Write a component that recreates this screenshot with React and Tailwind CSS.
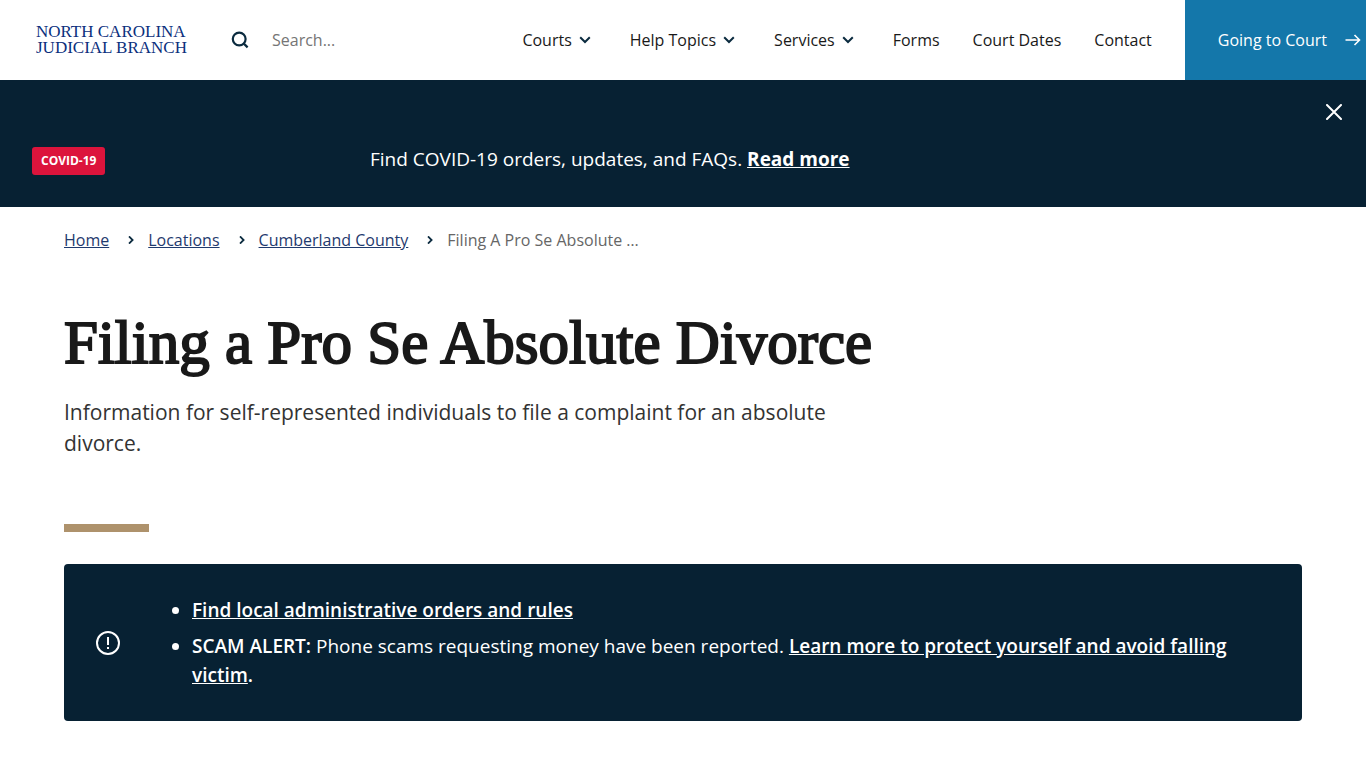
import { useState } from "react";

const navLinks = [
  { label: "Courts", menu: true },
  { label: "Help Topics", menu: true },
  { label: "Services", menu: true },
  { label: "Forms" },
  { label: "Court Dates" },
  { label: "Contact" },
];

const crumbs = ["Home", "Locations", "Cumberland County"];

const SearchIcon = () => (
  <svg width="18" height="18" viewBox="0 0 18 18" fill="none" stroke="#0b2b3f" strokeWidth="2.2" aria-hidden="true">
    <circle cx="8.2" cy="8" r="6.4" />
    <path d="M12.8 12.6L16.6 16.4" />
  </svg>
);

const ChevronDown = () => (
  <svg width="12" height="8" viewBox="0 0 12 8" fill="none" stroke="#0b2b3f" strokeWidth="2" aria-hidden="true">
    <path d="M1.2 1.3L6 6L10.8 1.3" />
  </svg>
);

const ChevronRight = () => (
  <svg width="6" height="8" viewBox="0 0 6 8" fill="none" stroke="#0b2b3f" strokeWidth="1.8" aria-hidden="true">
    <path d="M1 0.4L4.6 4L1 7.6" />
  </svg>
);

const ArrowRight = () => (
  <svg width="16" height="12" viewBox="0 0 16 12" fill="none" stroke="white" strokeWidth="1.6" aria-hidden="true">
    <path d="M0.5 6H14.5M9.5 1L14.5 6L9.5 11" />
  </svg>
);

const CloseIcon = () => (
  <svg width="16" height="16" viewBox="0 0 16 16" fill="none" stroke="white" strokeWidth="2" strokeLinecap="round" aria-hidden="true">
    <path d="M1 1L15 15M15 1L1 15" />
  </svg>
);

const AlertIcon = () => (
  <svg width="24" height="24" viewBox="0 0 24 24" fill="none" stroke="white" strokeWidth="2" aria-hidden="true">
    <circle cx="12" cy="12" r="11" />
    <path d="M12 6V14M12 16V18" />
  </svg>
);

const Header = () => (
  <header className="flex h-20 items-center bg-white">
    <a
      href="#"
      className="ml-9 w-[152px] shrink-0 font-['Liberation_Serif',serif] text-[17px] leading-4 text-[#0b2f7d]"
    >
      NORTH CAROLINA JUDICIAL BRANCH
    </a>
    <form className="ml-[43px] flex min-w-0 flex-1 items-center gap-[23px]">
      <button type="submit" aria-label="Search" className="cursor-pointer">
        <SearchIcon />
      </button>
      <input
        type="search"
        aria-label="Search"
        placeholder="Search..."
        className="w-full min-w-0 outline-none placeholder:text-[#757575]"
      />
    </form>
    <nav className="flex shrink-0 items-center gap-[33px] pr-[33px]">
      {navLinks.map((link) =>
        link.menu ? (
          <button key={link.label} className="flex cursor-pointer items-center gap-[7px] pr-[6px]">
            {link.label}
            <ChevronDown />
          </button>
        ) : (
          <a key={link.label} href="#">
            {link.label}
          </a>
        )
      )}
    </nav>
    <a
      href="#"
      className="flex h-full shrink-0 items-center gap-[18px] bg-[#1477aa] pr-[5px] pl-[33px] font-medium text-white"
    >
      Going to Court
      <ArrowRight />
    </a>
  </header>
);

const CovidBanner = ({ onClose }) => (
  <section className="relative bg-[#072133] px-8 pt-16 pb-8 text-white">
    <button
      aria-label="Close"
      onClick={onClose}
      className="absolute top-6 right-6 cursor-pointer"
    >
      <CloseIcon />
    </button>
    <div className="flex items-start">
      <div className="w-[338px] shrink-0 pt-[3px]">
        <span className="inline-block rounded-[3px] bg-[#dc143c] px-[9px] text-xs leading-7 font-bold">
          COVID-19
        </span>
      </div>
      <p className="text-[19px] leading-[31px] font-medium">
        Find COVID-19 orders, updates, and FAQs.{" "}
        <a href="#" className="font-bold underline">
          Read more
        </a>
      </p>
    </div>
  </section>
);

const Breadcrumbs = () => (
  <nav aria-label="Breadcrumb" className="pt-[21px]">
    <ol className="flex items-center">
      {crumbs.map((crumb) => (
        <li key={crumb} className="flex items-center">
          <a href="#" className="text-[#1f3a6e] underline">
            {crumb}
          </a>
          <span className="mr-[14px] ml-[19px]">
            <ChevronRight />
          </span>
        </li>
      ))}
      <li className="text-[#666]">Filing A Pro Se Absolute …</li>
    </ol>
  </nav>
);

const LocalAlert = () => (
  <section className="mt-8 flex items-center gap-[52px] rounded bg-[#072133] px-8 pt-8 pb-[31px] text-white">
    <AlertIcon />
    <ul className="flex-1 list-disc space-y-[7px] pl-5 text-[19px] leading-[29px] font-medium">
      <li>
        <a href="#" className="font-semibold underline">
          Find local administrative orders and rules
        </a>
      </li>
      <li>
        <strong className="font-semibold">SCAM ALERT:</strong> Phone scams
        requesting money have been reported.{" "}
        <a href="#" className="font-semibold underline">
          Learn more to protect yourself and avoid falling victim
        </a>
        <strong className="font-semibold">.</strong>
      </li>
    </ul>
  </section>
);

const App = () => {
  const [showBanner, setShowBanner] = useState(true);

  return (
    <div className="min-h-screen bg-white font-['Open_Sans',sans-serif] text-[#191919]">
      <Header />
      {showBanner && <CovidBanner onClose={() => setShowBanner(false)} />}
      <main className="px-16 pb-12">
        <Breadcrumbs />
        <h1 className="mt-[57px] font-['Liberation_Serif',serif] text-[61px] leading-[68px] [-webkit-text-stroke:2px]">
          Filing a Pro Se Absolute Divorce
        </h1>
        <p className="mt-5 max-w-[800px] text-[21px] leading-[31px] text-[#333]">
          Information for self-represented individuals to file a complaint for
          an absolute divorce.
        </p>
        <div className="mt-[65px] h-2 w-[85px] bg-[#ae926c]" />
        <LocalAlert />
      </main>
    </div>
  );
};

export default App;
